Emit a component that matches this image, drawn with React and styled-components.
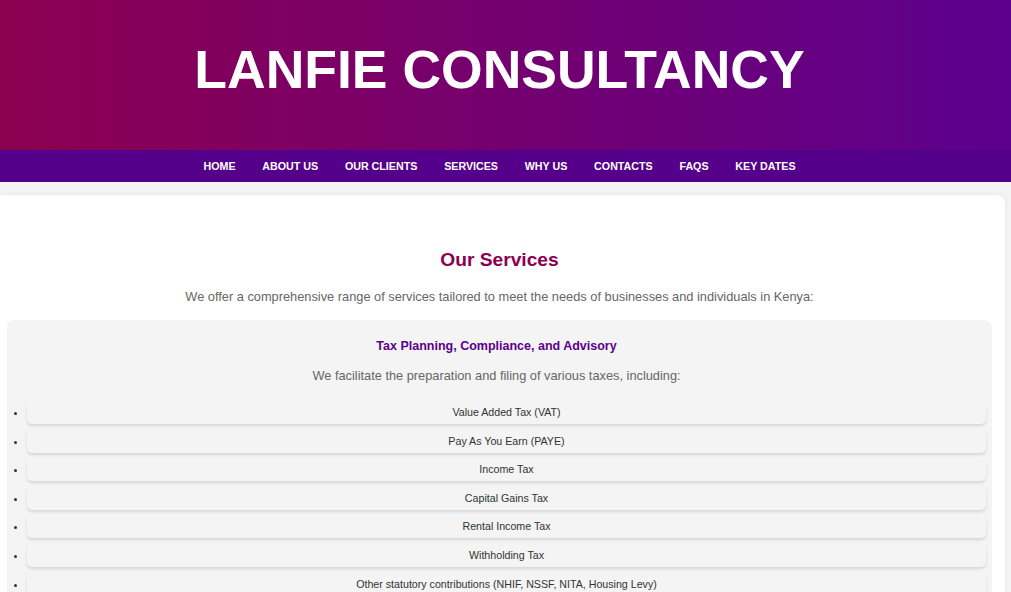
import React from 'react';
import styled, { createGlobalStyle } from 'styled-components';

const GlobalStyle = createGlobalStyle`
  html, body {
    margin: 0;
    padding: 0;
    overflow: hidden;
  }
  body {
    background: #f4f4f4;
    font-family: "Liberation Sans", Arial, sans-serif;
    color: #333;
  }
`;

const navLinks = ['Home', 'About Us', 'Our Clients', 'Services', 'Why Us', 'Contacts', 'FAQs', 'Key Dates'];

const taxes = [
  'Value Added Tax (VAT)',
  'Pay As You Earn (PAYE)',
  'Income Tax',
  'Capital Gains Tax',
  'Rental Income Tax',
  'Withholding Tax',
  'Other statutory contributions (NHIF, NSSF, NITA, Housing Levy)',
];

const App = () => (
  <>
    <GlobalStyle />
    <Header>
      <Brand>LANFIE CONSULTANCY</Brand>
    </Header>
    <Nav>
      {navLinks.map(link => (
        <NavLink key={link} href="#">{link}</NavLink>
      ))}
    </Nav>
    <Card>
      <Title>Our Services</Title>
      <Lead>
        We offer a comprehensive range of services tailored to meet the needs of businesses and individuals in Kenya:
      </Lead>
      <ServiceBox>
        <ServiceTitle>Tax Planning, Compliance, and Advisory</ServiceTitle>
        <ServiceText>We facilitate the preparation and filing of various taxes, including:</ServiceText>
        <TaxList>
          {taxes.map(tax => (
            <TaxItem key={tax}>{tax}</TaxItem>
          ))}
        </TaxList>
      </ServiceBox>
    </Card>
  </>
);

const Header = styled.header`
  height: 150px;
  padding-right: 12px;
  display: flex;
  align-items: center;
  justify-content: center;
  background: linear-gradient(to right, #8c0050, #5c008e);
`;

const Brand = styled.h1`
  margin: 0 0 10px;
  color: #fff;
  font-size: 53.5px;
  font-weight: 700;
  line-height: 1;
`;

const Nav = styled.nav`
  height: 32px;
  padding-right: 12px;
  display: flex;
  align-items: center;
  justify-content: center;
  background: #55008a;
`;

const NavLink = styled.a`
  margin: 0 13.4px;
  color: #fff;
  font-size: 10.7px;
  font-weight: 700;
  text-transform: uppercase;
  text-decoration: none;
`;

const Card = styled.main`
  margin: 13px 6px 0 -6px;
  padding: 54px 13px 20px;
  background: #fff;
  border-radius: 8px;
  box-shadow: 0 0 6px rgba(0, 0, 0, 0.06);
  text-align: center;
`;

const Title = styled.h2`
  margin: 0 0 18px;
  color: #8c0050;
  font-size: 19.2px;
  font-weight: 700;
`;

const Lead = styled.p`
  margin: 0 0 16px;
  color: #666;
  font-size: 12.8px;
`;

const ServiceBox = styled.section`
  padding: 19px 6px 10px 0;
  background: #f4f4f4;
  border-radius: 8px;
`;

const ServiceTitle = styled.h3`
  margin: 0 0 15px;
  color: #5c008e;
  font-size: 12.5px;
  font-weight: 700;
`;

const ServiceText = styled.p`
  margin: 0 0 17px;
  color: #666;
  font-size: 12.8px;
`;

const TaxList = styled.ul`
  margin: 0;
  padding-left: 20px;
  text-align: center;
`;

const TaxItem = styled.li`
  margin-bottom: 4.6px;
  padding: 6px 0;
  background: #f4f4f4;
  border-radius: 5px;
  box-shadow: 0 2px 3px rgba(0, 0, 0, 0.12);
  color: #333;
  font-size: 10.67px;
`;

export default App;
